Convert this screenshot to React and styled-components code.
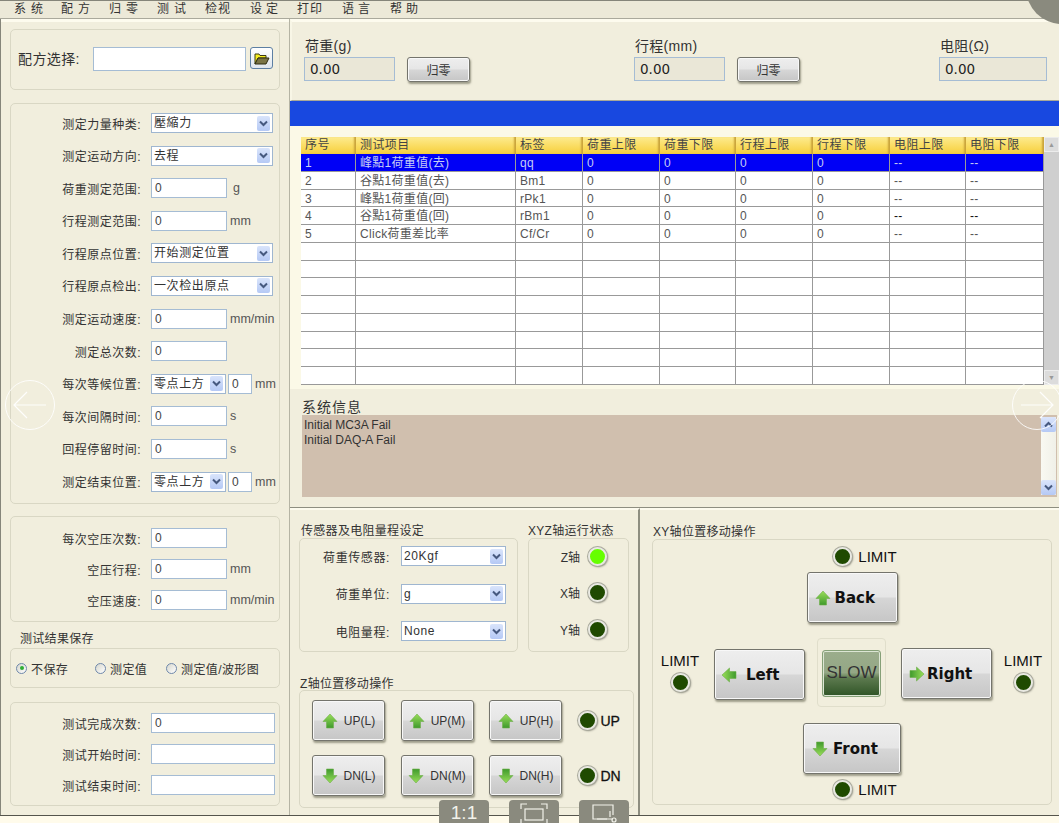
import React, { useId } from 'react';
import styled, { createGlobalStyle } from 'styled-components';

const GlobalStyle = createGlobalStyle`
    html, body {
        margin: 0;
        padding: 0;
        background: #fffbeb;
    }
    * {
        box-sizing: border-box;
    }
`;

const Screen = styled.div`
    position: relative;
    width: 1059px;
    height: 823px;
    overflow: hidden;
    background: #fffbeb;
    font-family: "Liberation Sans", "Noto Sans CJK SC", sans-serif;
    font-size: 12px;
    color: #333;
`;

const MenuBar = styled.div`
    display: flex;
    height: 19px;
    padding-left: 14px;
    background: #ece9d8;
    border-top: 1px solid #85857a;
    border-bottom: 1px solid #aaa99c;
`;

const MenuItem = styled.div`
    width: ${props => props.$width}px;
    line-height: 16px;
    letter-spacing: ${props => props.$spacing}px;
    color: #333;
    white-space: nowrap;
`;

const Body = styled.div`
    display: grid;
    grid-template-columns: 290px 1fr;
    height: 797px;
    border-bottom: 1px solid #55554d;
`;

const LeftColumn = styled.div`
    padding: 10px 9px 0 9px;
    background: #f1eedd;
    border-left: 1px solid #85857a;
    border-right: 1px solid #b5b4a4;
    box-shadow: inset 0 3px 0 #fdfbee;
`;

const Group = styled.div`
    height: ${props => props.$height}px;
    margin-bottom: ${props => props.$gap || 0}px;
    border: 1px solid #d9d7c4;
    border-radius: 5px;
    background: #f1eedd;
`;

const RecipeGroup = styled(Group)`
    display: flex;
    align-items: flex-start;
    padding: 17px 0 0 7px;
`;

const RecipeLabel = styled.span`
    width: 75px;
    font-size: 14px;
    line-height: 24px;
    letter-spacing: 0.4px;
`;

const RecipeInput = styled.div`
    width: 153px;
    height: 24px;
    background: #fff;
    border: 1px solid #a5bcd4;
`;

const FolderButton = styled.div`
    display: flex;
    align-items: center;
    justify-content: center;
    width: 23px;
    height: 22px;
    margin-left: 4px;
    background: linear-gradient(#ffffff, #dfe6ee);
    border: 1px solid #5d7fa3;
    border-radius: 3px;
`;

const FormStack = styled.div`
    display: flex;
    flex-direction: column;
    gap: ${props => props.$gap}px;
    padding-top: ${props => props.$top}px;
`;

const FormRow = styled.div`
    display: flex;
    align-items: center;
    height: 20px;
`;

const FormLabel = styled.span`
    width: 130px;
    margin-right: 10px;
    text-align: right;
    letter-spacing: 0.5px;
    white-space: nowrap;
`;

const TextBox = styled.div`
    width: ${props => props.$width}px;
    height: 20px;
    padding-left: 3px;
    margin-left: ${props => props.$left || 0}px;
    background: #fff;
    border: 1px solid #a5bcd4;
    line-height: 19px;
    color: #444;
    flex-shrink: 0;
`;

const Unit = styled.span`
    margin-left: ${props => props.$left || 3}px;
    color: #555;
    font-size: 12.5px;
    white-space: nowrap;
`;

const SelectBox = styled.div`
    display: flex;
    align-items: center;
    justify-content: space-between;
    width: ${props => props.$width}px;
    height: ${props => props.$height || 20}px;
    padding: 0 2px 0 2px;
    background: #fff;
    border: 1px solid #9fb6d0;
    line-height: 18px;
    color: #333;
    flex-shrink: 0;
    letter-spacing: 0.6px;
    white-space: nowrap;
`;

const ChevronBox = styled.span`
    display: flex;
    align-items: center;
    justify-content: center;
    width: 13px;
    height: 15px;
    background: linear-gradient(#d9e4fb, #b5c9f5);
    border-radius: 2px;
    flex-shrink: 0;
`;

const GroupTitle = styled.div`
    padding-left: ${props => props.$left || 0}px;
    height: ${props => props.$height || 16}px;
    line-height: 14px;
    letter-spacing: 0.3px;
    color: #333;
    white-space: nowrap;
`;

const RadioGroup = styled(Group)`
    display: grid;
    grid-template-columns: 79px 71px 1fr;
    align-items: center;
    padding-left: 5px;
`;

const RadioItem = styled.label`
    display: flex;
    align-items: center;
    gap: 4px;
    letter-spacing: 0.4px;
    white-space: nowrap;
`;

const RadioDot = styled.span`
    display: flex;
    align-items: center;
    justify-content: center;
    width: 11px;
    height: 11px;
    border: 1px solid #6f88ab;
    border-radius: 50%;
    background: linear-gradient(135deg, #d6d6cc, #fff);

    &::after {
        content: '';
        display: ${props => (props.$on ? 'block' : 'none')};
        width: 4px;
        height: 4px;
        border-radius: 50%;
        background: #2fae34;
    }
`;

const RightColumn = styled.div`
    display: flex;
    flex-direction: column;
    min-width: 0;
`;

const ReadoutBar = styled.div`
    display: grid;
    grid-template-columns: 330px 305px 1fr;
    height: 82px;
    padding: 17px 0 0 12px;
    background: #f1eedd;
    border-top: 3px solid #fdfbee;
    border-bottom: 1px solid #a9a898;
    border-left: 2px solid #f8f6e6;
`;

const ReadoutTitle = styled.div`
    padding-left: 1px;
    height: 18px;
    line-height: 15px;
    font-size: 14px;
    color: #333;
    letter-spacing: 0.3px;
`;

const ReadoutRow = styled.div`
    display: flex;
    align-items: flex-start;
    gap: 12px;
`;

const ReadoutValue = styled.div`
    width: ${props => props.$width}px;
    height: 24px;
    padding-left: 5px;
    background: #eae7d7;
    border: 1px solid #a5bcd4;
    font-family: "DejaVu Sans", sans-serif;
    font-size: 13.5px;
    line-height: 23px;
    color: #222;
`;

const BevelButton = styled.div`
    display: flex;
    align-items: center;
    justify-content: ${props => (props.$pad ? 'flex-start' : 'center')};
    flex-shrink: 0;
    width: ${props => props.$width}px;
    height: ${props => props.$height}px;
    gap: ${props => props.$gap || 0}px;
    padding-left: ${props => props.$pad || 0}px;
    margin-top: ${props => props.$top || 0}px;
    background: linear-gradient(#eeeeee 0, #e6e6e6 48%, #d6d6d6 52%, #c6c6c6 100%);
    border: 1px solid #74746c;
    border-radius: 3px;
    box-shadow: inset 0 0 0 1px #f8f8f8, 1px 2px 2px rgba(90, 90, 70, 0.55);
    color: #333;
`;

const BlueBand = styled.div`
    height: 25px;
    background: #1848e0;
`;

const TablePane = styled.div`
    display: flex;
    height: 263px;
    padding: 11px 0 0 11px;
    background: #fbf9e7;
`;

const TableGrid = styled.div`
    display: grid;
    grid-template-columns: 55px 160px 67px 77px 76px 77px 77px 76px 78px;
    grid-template-rows: 17px repeat(13, 17.75px);
    width: 743px;
    height: 248px;
    background: #fff;
`;

const HeadCell = styled.div`
    padding-left: 4px;
    background: linear-gradient(#fdeb8f, #f9d957 65%, #f5cd40);
    box-shadow: inset -3px 0 2px -1px #c9a33a;
    line-height: 17px;
    letter-spacing: 0.4px;
    color: #444;
    white-space: nowrap;
`;

const BodyCell = styled.div`
    padding-left: 4px;
    background: ${props => (props.$active ? '#0000f6' : '#fff')};
    border-right: 1px solid #999;
    border-bottom: 1px solid #999;
    line-height: 18px;
    letter-spacing: 0.3px;
    color: ${props => (props.$active ? '#c6cdf5' : props.$dark ? '#111' : '#555')};
    white-space: nowrap;
`;

const TableScroll = styled.div`
    display: flex;
    flex-direction: column;
    justify-content: space-between;
    width: 15px;
    height: 248px;
    background: #cfcfcf;
`;

const ScrollThumb = styled.div`
    display: flex;
    align-items: center;
    justify-content: center;
    height: 15px;
    background: #dcdcdc;
    border: 1px solid #ececec;
    color: #999;
    font-size: 7px;
`;

const InfoPane = styled.div`
    height: 119px;
    padding: 9px 2px 0 12px;
    background: #f1eedd;
    border-bottom: 1px solid #8e8e80;
`;

const InfoTitle = styled.div`
    height: 17px;
    line-height: 18px;
    font-size: 14px;
    letter-spacing: 1px;
    color: #333;
`;

const InfoBox = styled.div`
    display: flex;
    justify-content: space-between;
    height: 82px;
    padding: 2px 1px 2px 2px;
    background: #d0bfae;
`;

const InfoLines = styled.div`
    padding-top: 1px;
    line-height: 15px;
    color: #333;
`;

const InfoScroll = styled.div`
    display: flex;
    flex-direction: column;
    justify-content: space-between;
    width: 15px;
    background: linear-gradient(90deg, #f9f9f2, #f0f0e8);
`;

const ScrollButton = styled.div`
    display: flex;
    align-items: center;
    justify-content: center;
    height: 15px;
    background: linear-gradient(#dbe5fb, #b5c9f5);
    border-radius: 2px;
`;

const LowerArea = styled.div`
    display: grid;
    grid-template-columns: 350px 1fr;
    flex: 1;
    min-height: 0;
`;

const LowerLeft = styled.div`
    padding: 14px 4px 0 9px;
    background: #f1eedd;
    border-right: 2px solid #8e8e80;
    border-top: 2px solid #fdfbee;
`;

const SensorRow = styled.div`
    display: grid;
    grid-template-columns: 219px 101px;
    column-gap: 10px;
`;

const TitledColumn = styled.div`
    display: flex;
    flex-direction: column;
`;

const SensorStack = styled.div`
    display: flex;
    flex-direction: column;
    gap: 17.5px;
    padding-top: 7px;
`;

const SensorLine = styled.div`
    display: flex;
    align-items: center;
    height: 20px;
`;

const SensorLabel = styled.span`
    width: 90px;
    margin-right: 11px;
    text-align: right;
    letter-spacing: 0.6px;
    white-space: nowrap;
`;

const AxisStack = styled.div`
    display: flex;
    flex-direction: column;
    gap: 16.5px;
    padding-top: 7px;
`;

const AxisLine = styled.div`
    display: flex;
    align-items: center;
    justify-content: flex-end;
    gap: 8px;
    height: 20px;
    padding-right: 21px;
`;

const Led = styled.span`
    display: block;
    width: 19px;
    height: 19px;
    flex-shrink: 0;
    border: 2px solid #e9e9e2;
    border-radius: 50%;
    background: ${props => (props.$on ? '#66ff00' : '#1f4a00')};
    box-shadow: 0 0 0 1px #a9a99c, 1px 1px 2px rgba(60, 60, 50, 0.6);
`;

const ZTitle = styled(GroupTitle)`
    margin-top: 25px;
`;

const ZGrid = styled.div`
    display: grid;
    grid-template-columns: 73px 73px 73px auto;
    column-gap: 15.5px;
    row-gap: 14px;
    padding: 9px 0 0 12px;
`;

const ZLight = styled.div`
    display: flex;
    align-items: center;
    gap: 4px;
    font-size: 14px;
    color: #111;
    -webkit-text-stroke: 0.3px #111;
`;

const ButtonText = styled.span`
    font-size: 12px;
    color: #333;
`;

const LowerRight = styled.div`
    padding: 15px 7px 0 12px;
    background: #f1eedd;
    border-top: 2px solid #fdfbee;
`;

const XYPanel = styled(Group)`
    display: flex;
    flex-direction: column;
    align-items: center;
    padding-top: 7px;
`;

const LimitLine = styled.div`
    display: flex;
    align-items: center;
    gap: 6px;
    height: 19px;
    margin: ${props => props.$margin};
    padding-left: 26px;
`;

const LimitText = styled.span`
    font-size: 15px;
    line-height: 18px;
    color: #111;
`;

const CrossRow = styled.div`
    display: grid;
    grid-template-columns: 54px 103px 84px 102px 40px;
    align-self: flex-start;
    height: 69px;
    margin: 15px 0 16px 7px;
`;

const SideLimit = styled.div`
    display: flex;
    flex-direction: column;
    align-items: center;
    width: 40px;
    gap: 3px;
    padding-top: 14px;
`;

const MoveLabel = styled.span`
    font-family: "DejaVu Sans", sans-serif;
    font-size: 15px;
    font-weight: 700;
    color: #111;
`;

const SlowPanel = styled.div`
    display: flex;
    align-items: center;
    justify-content: center;
    width: 69px;
    height: 69px;
    padding-top: 1px;
    border: 1px solid #e0decb;
    border-radius: 4px;
`;

const SlowButton = styled.div`
    display: flex;
    align-items: center;
    justify-content: center;
    width: 59px;
    height: 47px;
    background: linear-gradient(#9bad8c 0, #94a785 48%, #5d7a4f 60%, #2f5426 100%);
    border: 1px solid #86a078;
    border-radius: 3px;
    box-shadow: inset 0 0 0 1px #dce6d4;
    font-size: 17px;
    color: #333;
`;

const HudButton = styled.div`
    position: absolute;
    bottom: 0;
    left: ${props => props.$left}px;
    display: flex;
    align-items: flex-start;
    justify-content: center;
    width: 50px;
    height: 23px;
    padding-top: 3px;
    background: #8a8a7e;
    border-radius: 4px 4px 0 0;
    font-size: 19px;
    line-height: 20px;
    color: #f2f2ea;
`;

const HudCircle = styled.svg`
    position: absolute;
    top: 380px;
    left: ${props => props.$left}px;
    width: 50px;
    height: 50px;
`;

const CornerCircle = styled.div`
    position: absolute;
    top: -48px;
    left: 1026px;
    width: 72px;
    height: 72px;
    border-radius: 50%;
    background: #8a8a7e;
`;

const menuItems = [
    { label: '系统', width: 47, spacing: 5 },
    { label: '配方', width: 48, spacing: 5 },
    { label: '归零', width: 48, spacing: 5 },
    { label: '测试', width: 48, spacing: 5 },
    { label: '检视', width: 45, spacing: 1 },
    { label: '设定', width: 47, spacing: 4 },
    { label: '打印', width: 45, spacing: 1 },
    { label: '语言', width: 48, spacing: 4 },
    { label: '帮助', width: 48, spacing: 4 },
];

const tableHeads = ['序号', '测试项目', '标签', '荷重上限', '荷重下限', '行程上限', '行程下限', '电阻上限', '电阻下限'];

const tableRows = [
    ['1', '峰點1荷重值(去)', 'qq', '0', '0', '0', '0', '--', '--'],
    ['2', '谷點1荷重值(去)', 'Bm1', '0', '0', '0', '0', '--', '--'],
    ['3', '峰點1荷重值(回)', 'rPk1', '0', '0', '0', '0', '--', '--'],
    ['4', '谷點1荷重值(回)', 'rBm1', '0', '0', '0', '0', '--', '--'],
    ['5', 'Click荷重差比率', 'Cf/Cr', '0', '0', '0', '0', '--', '--'],
];

function Chevron({ up, color = '#46597f' }) {
    return (
        <svg width="9" height="7" viewBox="0 0 9 7">
            <path d={up ? 'M1 5.5 4.5 2 8 5.5' : 'M1 1.5 4.5 5 8 1.5'} fill="none" stroke={color} strokeWidth="2" />
        </svg>
    );
}

function Select({ value, width, height }) {
    return (
        <SelectBox $width={width} $height={height}>
            <span>{value}</span>
            <ChevronBox>
                <Chevron />
            </ChevronBox>
        </SelectBox>
    );
}

function FolderIcon() {
    return (
        <svg width="16" height="13" viewBox="0 0 16 13">
            <path d="M1 2h4l1 1.5h6V6H4L1 12z" fill="#f6ee20" stroke="#3d3a10" strokeWidth="1" />
            <path d="M1 12 4 6h11l-3 6z" fill="#7a7446" stroke="#2f2c10" strokeWidth="1" />
        </svg>
    );
}

// the green block arrow, drawn pointing up and turned for the other directions
function MoveArrow({ turn = 0, size = 16 }) {
    const id = useId();
    return (
        <svg width={size} height={size} viewBox="0 0 16 16" style={{ transform: `rotate(${turn}deg)` }}>
            <defs>
                <linearGradient id={id} x1="0" y1="0" x2="0" y2="1">
                    <stop offset="0" stopColor="#9ade5a" />
                    <stop offset="1" stopColor="#3f9a2c" />
                </linearGradient>
            </defs>
            <path d="M8 1 15 8.5H11.5V15H4.5V8.5H1Z" fill={`url(#${id})`} stroke="#6fae4a" strokeWidth="0.6" />
        </svg>
    );
}

function FormField({ label, children }) {
    return (
        <FormRow>
            <FormLabel>{label}</FormLabel>
            {children}
        </FormRow>
    );
}

function ZButton({ label, turn }) {
    return (
        <BevelButton $width={73} $height={41} $gap={6}>
            <MoveArrow turn={turn} />
            <ButtonText>{label}</ButtonText>
        </BevelButton>
    );
}

function HudArrow({ left, flip }) {
    return (
        <HudCircle $left={left} viewBox="0 0 50 50">
            <circle cx="25" cy="25" r="24.5" fill="none" stroke="#fff" strokeOpacity="0.85" strokeWidth="1" />
            <path
                d={flip ? 'M9 25H41M28 12 41 25 28 38' : 'M41 25H9M22 12 9 25 22 38'}
                fill="none"
                stroke="#fff"
                strokeOpacity="0.9"
                strokeWidth="1.2"
            />
        </HudCircle>
    );
}

export default function App() {
    return (
        <Screen>
            <GlobalStyle />
            <MenuBar>
                {menuItems.map(item => (
                    <MenuItem key={item.label} $width={item.width} $spacing={item.spacing}>
                        {item.label}
                    </MenuItem>
                ))}
            </MenuBar>
            <Body>
                <LeftColumn>
                    <RecipeGroup $height={61} $gap={13}>
                        <RecipeLabel>配方选择:</RecipeLabel>
                        <RecipeInput />
                        <FolderButton>
                            <FolderIcon />
                        </FolderButton>
                    </RecipeGroup>

                    <Group $height={401} $gap={12}>
                        <FormStack $gap={12.6} $top={9}>
                            <FormField label="测定力量种类:"><Select value="壓縮力" width={122} /></FormField>
                            <FormField label="测定运动方向:"><Select value="去程" width={122} /></FormField>
                            <FormField label="荷重测定范围:"><TextBox $width={76}>0</TextBox><Unit $left={6}>g</Unit></FormField>
                            <FormField label="行程测定范围:"><TextBox $width={76}>0</TextBox><Unit>mm</Unit></FormField>
                            <FormField label="行程原点位置:"><Select value="开始测定位置" width={122} /></FormField>
                            <FormField label="行程原点检出:"><Select value="一次检出原点" width={122} /></FormField>
                            <FormField label="测定运动速度:"><TextBox $width={76}>0</TextBox><Unit>mm/min</Unit></FormField>
                            <FormField label="测定总次数:"><TextBox $width={76}>0</TextBox></FormField>
                            <FormField label="每次等候位置:">
                                <Select value="零点上方" width={75} />
                                <TextBox $width={24} $left={2}>0</TextBox>
                                <Unit $left={3}>mm</Unit>
                            </FormField>
                            <FormField label="每次间隔时间:"><TextBox $width={76}>0</TextBox><Unit $left={3}>s</Unit></FormField>
                            <FormField label="回程停留时间:"><TextBox $width={76}>0</TextBox><Unit $left={3}>s</Unit></FormField>
                            <FormField label="测定结束位置:">
                                <Select value="零点上方" width={75} />
                                <TextBox $width={24} $left={2}>0</TextBox>
                                <Unit $left={3}>mm</Unit>
                            </FormField>
                        </FormStack>
                    </Group>

                    <Group $height={106} $gap={10}>
                        <FormStack $gap={11} $top={11}>
                            <FormField label="每次空压次数:"><TextBox $width={76}>0</TextBox></FormField>
                            <FormField label="空压行程:"><TextBox $width={76}>0</TextBox><Unit>mm</Unit></FormField>
                            <FormField label="空压速度:"><TextBox $width={76}>0</TextBox><Unit>mm/min</Unit></FormField>
                        </FormStack>
                    </Group>

                    <GroupTitle $left={10} $height={16}>测试结果保存</GroupTitle>
                    <RadioGroup $height={40} $gap={14}>
                        <RadioItem><RadioDot $on />不保存</RadioItem>
                        <RadioItem><RadioDot />测定值</RadioItem>
                        <RadioItem><RadioDot />测定值/波形图</RadioItem>
                    </RadioGroup>

                    <Group $height={104}>
                        <FormStack $gap={11} $top={10}>
                            <FormField label="测试完成次数:"><TextBox $width={124}>0</TextBox></FormField>
                            <FormField label="测试开始时间:"><TextBox $width={124} /></FormField>
                            <FormField label="测试结束时间:"><TextBox $width={124} /></FormField>
                        </FormStack>
                    </Group>
                </LeftColumn>

                <RightColumn>
                    <ReadoutBar>
                        <div>
                            <ReadoutTitle>荷重(g)</ReadoutTitle>
                            <ReadoutRow>
                                <ReadoutValue $width={91}>0.00</ReadoutValue>
                                <BevelButton $width={63} $height={25}>归零</BevelButton>
                            </ReadoutRow>
                        </div>
                        <div>
                            <ReadoutTitle>行程(mm)</ReadoutTitle>
                            <ReadoutRow>
                                <ReadoutValue $width={91}>0.00</ReadoutValue>
                                <BevelButton $width={63} $height={25}>归零</BevelButton>
                            </ReadoutRow>
                        </div>
                        <div>
                            <ReadoutTitle>电阻(Ω)</ReadoutTitle>
                            <ReadoutRow>
                                <ReadoutValue $width={108}>0.00</ReadoutValue>
                            </ReadoutRow>
                        </div>
                    </ReadoutBar>
                    <BlueBand />
                    <TablePane>
                        <TableGrid>
                            {tableHeads.map(head => (
                                <HeadCell key={head}>{head}</HeadCell>
                            ))}
                            {Array.from({ length: 13 }).map((_, rowIndex) =>
                                (tableRows[rowIndex] || tableHeads.map(() => '')).map((text, colIndex) => (
                                    <BodyCell
                                        key={`${rowIndex}-${colIndex}`}
                                        $active={rowIndex === 0}
                                        $dark={rowIndex === 3 && colIndex >= 7}
                                    >
                                        {text}
                                    </BodyCell>
                                ))
                            )}
                        </TableGrid>
                        <TableScroll>
                            <ScrollThumb>▲</ScrollThumb>
                            <ScrollThumb>▼</ScrollThumb>
                        </TableScroll>
                    </TablePane>
                    <InfoPane>
                        <InfoTitle>系统信息</InfoTitle>
                        <InfoBox>
                            <InfoLines>
                                Initial MC3A Fail
                                <br />
                                Initial DAQ-A Fail
                            </InfoLines>
                            <InfoScroll>
                                <ScrollButton><Chevron up /></ScrollButton>
                                <ScrollButton><Chevron /></ScrollButton>
                            </InfoScroll>
                        </InfoBox>
                    </InfoPane>
                    <LowerArea>
                        <LowerLeft>
                            <SensorRow>
                                <TitledColumn>
                                    <GroupTitle $left={2} $height={14}>传感器及电阻量程设定</GroupTitle>
                                    <Group $height={114}>
                                        <SensorStack>
                                            <SensorLine>
                                                <SensorLabel>荷重传感器:</SensorLabel>
                                                <Select value="20Kgf" width={105} />
                                            </SensorLine>
                                            <SensorLine>
                                                <SensorLabel>荷重单位:</SensorLabel>
                                                <Select value="g" width={105} />
                                            </SensorLine>
                                            <SensorLine>
                                                <SensorLabel>电阻量程:</SensorLabel>
                                                <Select value="None" width={105} />
                                            </SensorLine>
                                        </SensorStack>
                                    </Group>
                                </TitledColumn>
                                <TitledColumn>
                                    <GroupTitle $height={14}>XYZ轴运行状态</GroupTitle>
                                    <Group $height={114}>
                                        <AxisStack>
                                            <AxisLine>Z轴<Led $on /></AxisLine>
                                            <AxisLine>X轴<Led /></AxisLine>
                                            <AxisLine>Y轴<Led /></AxisLine>
                                        </AxisStack>
                                    </Group>
                                </TitledColumn>
                            </SensorRow>
                            <ZTitle $left={1} $height={13}>Z轴位置移动操作</ZTitle>
                            <Group $height={118}>
                                <ZGrid>
                                    <ZButton label="UP(L)" />
                                    <ZButton label="UP(M)" />
                                    <ZButton label="UP(H)" />
                                    <ZLight><Led />UP</ZLight>
                                    <ZButton label="DN(L)" turn={180} />
                                    <ZButton label="DN(M)" turn={180} />
                                    <ZButton label="DN(H)" turn={180} />
                                    <ZLight><Led />DN</ZLight>
                                </ZGrid>
                            </Group>
                        </LowerLeft>
                        <LowerRight>
                            <GroupTitle $left={1} $height={14}>XY轴位置移动操作</GroupTitle>
                            <XYPanel $height={266}>
                                <LimitLine $margin="0 0 6px">
                                    <Led /><LimitText>LIMIT</LimitText>
                                </LimitLine>
                                <BevelButton $width={91} $height={51} $gap={4} $pad={7}>
                                    <MoveArrow />
                                    <MoveLabel>Back</MoveLabel>
                                </BevelButton>
                                <CrossRow>
                                    <SideLimit>
                                        <LimitText>LIMIT</LimitText>
                                        <Led />
                                    </SideLimit>
                                    <BevelButton $width={91} $height={51} $gap={9} $pad={6} $top={11}>
                                        <MoveArrow turn={-90} />
                                        <MoveLabel>Left</MoveLabel>
                                    </BevelButton>
                                    <SlowPanel>
                                        <SlowButton>SLOW</SlowButton>
                                    </SlowPanel>
                                    <BevelButton $width={91} $height={51} $gap={2} $pad={7} $top={10}>
                                        <MoveArrow turn={90} />
                                        <MoveLabel>Right</MoveLabel>
                                    </BevelButton>
                                    <SideLimit>
                                        <LimitText>LIMIT</LimitText>
                                        <Led />
                                    </SideLimit>
                                </CrossRow>
                                <BevelButton $width={98} $height={51} $gap={5} $pad={8}>
                                    <MoveArrow turn={180} />
                                    <MoveLabel>Front</MoveLabel>
                                </BevelButton>
                                <LimitLine $margin="6px 0 0">
                                    <Led /><LimitText>LIMIT</LimitText>
                                </LimitLine>
                            </XYPanel>
                        </LowerRight>
                    </LowerArea>
                </RightColumn>
            </Body>

            <CornerCircle />
            <HudArrow left={5} />
            <HudArrow left={1012} flip />
            <HudButton $left={439}>1:1</HudButton>
            <HudButton $left={509}>
                <svg width="28" height="20" viewBox="0 0 28 20" fill="none" stroke="#f2f2ea" strokeWidth="1.2">
                    <path d="M1 6V1H7M21 1H27V6M1 20V16M27 16V20" />
                    <rect x="5" y="6" width="18" height="11" />
                </svg>
            </HudButton>
            <HudButton $left={579}>
                <svg width="26" height="20" viewBox="0 0 26 20" fill="none" stroke="#f2f2ea" strokeWidth="1.2">
                    <path d="M16 16H2V2H22V12" />
                    <path d="M6 16H22M19 8V14" />
                    <circle cx="23" cy="17" r="2" />
                </svg>
            </HudButton>
        </Screen>
    );
}
